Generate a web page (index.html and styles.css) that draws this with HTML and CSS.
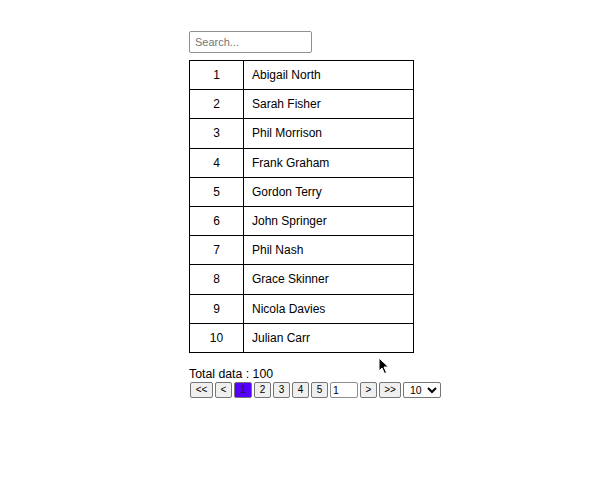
FILE: index.html
```html
<!DOCTYPE html>
<html>
<head>
<meta charset="utf-8">
<link rel="stylesheet" href="styles.css">
</head>
<body>
<div class="wrap">
  <input class="search" type="text" placeholder="Search...">
  <table class="grid">
    <tbody>
      <tr><td class="num">1</td><td class="name">Abigail North</td></tr>
      <tr><td class="num">2</td><td class="name">Sarah Fisher</td></tr>
      <tr><td class="num">3</td><td class="name">Phil Morrison</td></tr>
      <tr><td class="num">4</td><td class="name">Frank Graham</td></tr>
      <tr><td class="num">5</td><td class="name">Gordon Terry</td></tr>
      <tr><td class="num">6</td><td class="name">John Springer</td></tr>
      <tr><td class="num">7</td><td class="name">Phil Nash</td></tr>
      <tr><td class="num">8</td><td class="name">Grace Skinner</td></tr>
      <tr><td class="num">9</td><td class="name">Nicola Davies</td></tr>
      <tr><td class="num">10</td><td class="name">Julian Carr</td></tr>
    </tbody>
  </table>
  <div class="total">Total data : 100</div>
  <div class="pager">
    <button class="pbtn first">&lt;&lt;</button>
    <button class="pbtn">&lt;</button>
    <button class="pbtn active">1</button>
    <button class="pbtn">2</button>
    <button class="pbtn">3</button>
    <button class="pbtn">4</button>
    <button class="pbtn">5</button>
    <input class="pinput" type="text" value="1">
    <button class="pbtn">&gt;</button>
    <button class="pbtn last">&gt;&gt;</button>
    <select class="psel"><option>10</option></select>
  </div>
</div>
<svg class="cursor" width="12" height="18" viewBox="0 0 12 18"><path d="M1 1 L1 14 L4 11 L6.5 16.5 L8.5 15.5 L6 10 L10.5 10 Z" fill="#000" stroke="#fff" stroke-width="1"/></svg>
</body>
</html>
```
FILE: styles.css
```css
html, body {
  margin: 0;
  padding: 0;
  background: #fff;
}
body {
  font-family: "Liberation Sans", Arial, sans-serif;
  color: #000;
  position: relative;
  height: 494px;
}
.wrap {
  padding: 31px 0 0 189px;
  display: flex;
  flex-direction: column;
  align-items: flex-start;
}
.search {
  box-sizing: border-box;
  width: 123px;
  height: 22px;
  border: 1px solid #8f8f8f;
  border-radius: 2px;
  padding: 1px 5px;
  font-family: "Liberation Sans", Arial, sans-serif;
  font-size: 11px;
  margin: 0 0 7px 0;
}
.search::placeholder { color: #757575; }
.grid {
  border-collapse: collapse;
  width: 225px;
  font-size: 12px;
}
.grid td {
  border: 1px solid #000;
  height: 29.2px;
  padding: 0 8px;
  box-sizing: border-box;
}
.grid .num { width: 54px; text-align: center; }
.total {
  margin-top: 14px;
  font-size: 12.3px;
  line-height: 15px;
}
.pager {
  display: flex;
  align-items: center;
  gap: 2px;
  padding-left: 1px;
}
.pbtn {
  box-sizing: border-box;
  height: 16px;
  width: 17px;
  padding: 0;
  font-family: "Liberation Sans", Arial, sans-serif;
  font-size: 10px;
  line-height: 14px;
  color: #000;
  background: #efefef;
  border: 1px solid #767676;
  border-radius: 2px;
}
.pbtn.first { width: 23px; }
.pbtn.last { width: 22px; }
.pbtn.active { background: #5500ff; color: #1a1a4a; width: 18px; }
.pinput {
  box-sizing: border-box;
  width: 28px;
  height: 16px;
  border: 1px solid #8f8f8f;
  border-radius: 2px;
  padding: 0 2px;
  font-family: "Liberation Sans", Arial, sans-serif;
  font-size: 10.5px;
}
.psel {
  box-sizing: border-box;
  width: 38px;
  height: 16px;
  font-family: "Liberation Sans", Arial, sans-serif;
  font-size: 10.5px;
  border: 1px solid #767676;
  border-radius: 2px;
  padding: 0 0 0 2px;
  background: #fff;
}
.cursor {
  position: absolute;
  left: 378px;
  top: 357px;
}
```
